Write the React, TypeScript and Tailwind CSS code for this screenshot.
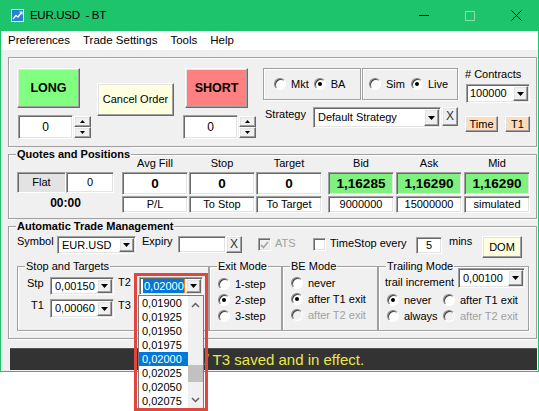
import React from "react";

const sunken =
  "border border-t-[#a0a0a0] border-l-[#a0a0a0] border-r-white border-b-white shadow-[inset_1px_1px_0_#696969,inset_-1px_-1px_0_#e3e3e3]";
const raised =
  "border border-t-white border-l-white border-r-[#696969] border-b-[#696969] shadow-[inset_-1px_-1px_0_#a0a0a0,inset_1px_1px_0_#e3e3e3]";
const etched = "relative border border-[#a0a0a0] shadow-[inset_1px_1px_0_#fff,1px_1px_0_#fff]";

const Tri = ({ up = false, small = false }: { up?: boolean; small?: boolean }) =>
  small ? (
    <svg width="5" height="3" viewBox="0 0 5 3">
      <path d={up ? "M0 3h5L2.5 0z" : "M0 0h5L2.5 3z"} fill="#000" />
    </svg>
  ) : (
    <svg width="7" height="4" viewBox="0 0 7 4">
      <path d={up ? "M0 4h7L3.5 0z" : "M0 0h7L3.5 4z"} fill="#000" />
    </svg>
  );

const Combo = ({ className = "", children }: { className?: string; children?: React.ReactNode }) => (
  <div className={`${sunken} bg-white flex p-[1px] ${className}`}>
    <div className="flex-1 flex items-center pl-[3px] overflow-hidden whitespace-nowrap">{children}</div>
    <div className={`${raised} bg-[#f0f0f0] w-[15px] flex items-center justify-center`}>
      <Tri />
    </div>
  </div>
);

const Btn = ({ className = "", children }: { className?: string; children?: React.ReactNode }) => (
  <div className={`${raised} flex items-center justify-center ${className}`}>{children}</div>
);

const Spinner = ({ className = "" }: { className?: string }) => (
  <div className={`flex gap-[1px] ${className}`}>
    <div className={`${sunken} bg-white w-[55px] h-[24px] flex items-center justify-center text-[12px]`}>0</div>
    <div className="w-[17px] h-[24px] flex flex-col justify-between py-[1px]">
      <div className={`${raised} bg-[#f0f0f0] h-[11px] flex items-center justify-center`}>
        <Tri up small />
      </div>
      <div className={`${raised} bg-[#f0f0f0] h-[11px] flex items-center justify-center`}>
        <Tri small />
      </div>
    </div>
  </div>
);

const Radio = ({ on = false, off = false }: { on?: boolean; off?: boolean }) => (
  <span
    className={`w-[12px] h-[12px] rounded-full border border-t-[#808080] border-l-[#808080] border-r-white border-b-white shadow-[inset_1px_1px_0_#404040] ${
      off ? "bg-[#f0f0f0]" : "bg-white"
    } flex items-center justify-center shrink-0`}
  >
    {on && <span className="w-[4px] h-[4px] rounded-full bg-black" />}
  </span>
);

const RadioItem = ({ label, on = false, off = false, className = "" }: { label: string; on?: boolean; off?: boolean; className?: string }) => (
  <div className={`flex items-center ${className}`}>
    <Radio on={on} off={off} />
    <span className={`ml-[5px] whitespace-nowrap ${off ? "text-[#a0a0a0]" : ""}`}>{label}</span>
  </div>
);

const Check = ({ on = false, off = false, className = "" }: { on?: boolean; off?: boolean; className?: string }) => (
  <span className={`${sunken} w-[13px] h-[13px] ${off ? "bg-[#f0f0f0]" : "bg-white"} flex items-center justify-center shrink-0 ${className}`}>
    {on && (
      <svg width="9" height="8" viewBox="0 0 9 8">
        <path d="M1 4l2.5 2.5L8 1" fill="none" stroke={off ? "#a0a0a0" : "#000"} strokeWidth="1.6" />
      </svg>
    )}
  </span>
);

const GroupLabel = ({ className = "", children }: { className?: string; children: React.ReactNode }) => (
  <span className={`absolute left-[7px] top-[-8px] px-[1px] bg-[#f0f0f0] leading-[14px] whitespace-nowrap ${className}`}>{children}</span>
);

const QCol = ({ head, value, sub, green = false }: { head: string; value: string; sub: string; green?: boolean }) => (
  <div className="w-[66px] flex flex-col">
    <div className="h-[17px] leading-[17px] text-center">{head}</div>
    <div
      className={`${sunken} h-[23px] ${green ? "bg-[#80f080]" : "bg-white"} flex items-center justify-center font-bold text-[13.5px]`}
    >
      {value}
    </div>
    <div className={`${sunken} bg-white h-[17px] mt-[1px] flex items-center justify-center`}>{sub}</div>
  </div>
);

const listItems = ["0,01900", "0,01925", "0,01950", "0,01975", "0,02000", "0,02025", "0,02050", "0,02075"];

export default function App() {
  return (
    <div className="w-[539px] h-[411px] bg-white relative overflow-hidden font-['Liberation_Sans',Arial,sans-serif] text-[11px] leading-[13px] text-black">
      <div className="w-[539px] h-[372px] bg-[#1ec46c] flex flex-col">
        {/* title bar */}
        <div className="h-[31px] flex items-center shrink-0">
          <svg className="ml-[11px]" width="13" height="13" viewBox="0 0 13 13">
            <rect x="0.5" y="0.5" width="12" height="12" fill="#2b7fd4" stroke="#d6e8f8" />
            <path d="M2 10L5 6.5L7 8L10.5 3.5" fill="none" stroke="#fff" strokeWidth="1.3" />
            <path d="M8.5 3h2.5v2.5" fill="none" stroke="#fff" strokeWidth="1.1" />
          </svg>
          <span className="ml-[6px] text-[11.5px] tracking-[-0.3px] whitespace-pre">EUR.USD  - BT</span>
          <div className="ml-auto flex h-full">
            <div className="w-[46px] flex items-center justify-center">
              <span className="w-[10px] h-[1px] bg-black" />
            </div>
            <div className="w-[46px] flex items-center justify-center">
              <span className="w-[10px] h-[10px] border border-[#86dcab]" />
            </div>
            <div className="w-[46px] flex items-center justify-center">
              <svg width="11" height="11" viewBox="0 0 11 11">
                <path d="M0.5 0.5L10.5 10.5M10.5 0.5L0.5 10.5" stroke="#000" strokeWidth="1" />
              </svg>
            </div>
          </div>
        </div>

        <div className="mx-[1px] mb-[1px] flex-1 flex flex-col">
          {/* menu */}
          <div className="h-[19px] bg-white flex items-center gap-[13px] pl-[7px] text-[11.5px] shrink-0">
            <span>Preferences</span>
            <span>Trade Settings</span>
            <span>Tools</span>
            <span>Help</span>
          </div>

          {/* body */}
          <div className="flex-1 bg-[#f0f0f0] flex flex-col">
            {/* order box */}
            <div className={`${etched} ml-[7px] mt-[7px] w-[529px] h-[90px] flex items-start`}>
              <div className="ml-[8px] mt-[10px] flex flex-col">
                <Btn className="w-[63px] h-[40px] bg-[#80ff80] text-[12.5px] font-bold">LONG</Btn>
                <Spinner className="mt-[7px] ml-[1px]" />
              </div>
              <Btn className="ml-[6px] mt-[25px] w-[77px] h-[33px] bg-[#ffffe0]">Cancel Order</Btn>
              <div className="ml-[9px] mt-[10px] flex flex-col">
                <Btn className="ml-[2px] w-[63px] h-[40px] bg-[#ff8080] text-[12.5px] font-bold">SHORT</Btn>
                <Spinner className="mt-[7px]" />
              </div>
              <div className="ml-[7px] mt-[10px] flex flex-col">
                <div className="flex gap-[1px]">
                  <div className={`${etched} w-[98px] h-[32px] flex items-center pl-[10px]`}>
                    <RadioItem label="Mkt" />
                    <RadioItem label="BA" on className="ml-[5px]" />
                  </div>
                  <div className={`${etched} w-[96px] h-[32px] flex items-center pl-[6px]`}>
                    <RadioItem label="Sim" />
                    <RadioItem label="Live" on className="ml-[6px]" />
                  </div>
                </div>
                <div className="mt-[7px] flex items-start">
                  <span className="ml-[2px] w-[48px] pt-[1px]">Strategy</span>
                  <Combo className="w-[128px] h-[21px]">Default Strategy</Combo>
                  <Btn className="ml-[1px] w-[16px] h-[19px] bg-[#f0f0f0] text-[12px] text-[#333]">X</Btn>
                </div>
              </div>
              <div className="ml-[7px] mt-[10px] flex flex-col">
                <span className="whitespace-nowrap">
                  # Contracts
                </span>
                <Combo className="mt-[3px] ml-[1px] w-[64px] h-[19px]">
                  <span className="-ml-[1px]">100000</span>
                </Combo>
                <div className="mt-[13px] flex">
                  <Btn className="w-[33px] h-[16px] bg-[#ffdcb8]">Time</Btn>
                  <Btn className="ml-[7px] w-[25px] h-[16px] bg-[#ffdcb8]">T1</Btn>
                </div>
              </div>
            </div>

            {/* quotes and positions */}
            <div className={`${etched} ml-[7px] mt-[7px] w-[529px] h-[65px] flex items-start`}>
              <GroupLabel className="font-bold">Quotes and Positions</GroupLabel>
              <div className="ml-[8px] mt-[17px] w-[97px] flex flex-col items-center">
                <div className="flex">
                  <div className={`${sunken} bg-[#e3e3e3] w-[49px] h-[21px] flex items-center justify-center`}>Flat</div>
                  <div className={`${sunken} bg-white w-[48px] h-[21px] flex items-center justify-center`}>0</div>
                </div>
                <span className="mt-[3px] font-bold text-[12px] leading-[14px]">00:00</span>
              </div>
              <div className="ml-[8px] flex gap-[1px]">
                <QCol head="Avg Fill" value="0" sub="P/L" />
                <QCol head="Stop" value="0" sub="To Stop" />
                <QCol head="Target" value="0" sub="To Target" />
              </div>
              <div className="ml-[6px] flex gap-[2px]">
                <QCol head="Bid" value="1,16285" sub="9000000" green />
                <QCol head="Ask" value="1,16290" sub="15000000" green />
                <QCol head="Mid" value="1,16290" sub="simulated" green />
              </div>
            </div>

            {/* automatic trade management */}
            <div className={`${etched} ml-[7px] mt-[7px] w-[529px] h-[113px] flex flex-col`}>
              <GroupLabel className="font-bold">Automatic Trade Management</GroupLabel>
              <div className="mt-[8px] ml-[8px] flex items-start">
                <span className="w-[40px]">Symbol</span>
                <Combo className="mt-[1px] w-[79px] h-[18px]">EUR.USD</Combo>
                <span className="ml-[6px] w-[36px]">Expiry</span>
                <div className={`${sunken} bg-white mt-[1px] w-[48px] h-[17px]`} />
                <Btn className="mt-[1px] w-[16px] h-[17px] bg-[#f0f0f0] text-[12px] text-[#333]">X</Btn>
                <Check on off className="ml-[16px] mt-[3px]" />
                <span className="ml-[4px] mt-[2px] w-[38px] text-[#a0a0a0]">ATS</span>
                <Check className="mt-[3px]" />
                <span className="ml-[4px] mt-[2px] w-[86px] whitespace-nowrap">TimeStop every</span>
                <div className={`${sunken} bg-white mt-[2px] w-[26px] h-[17px] flex items-center justify-center`}>5</div>
                <span className="ml-[7px] w-[33px]">mins</span>
                <Btn className="mt-[1px] w-[40px] h-[22px] bg-[#ffffe0]">DOM</Btn>
              </div>

              <div className="mt-[8px] ml-[8px] flex">
                {/* stop and targets */}
                <div className={`${etched} w-[192px] h-[65px] flex flex-col`}>
                  <GroupLabel>Stop and Targets</GroupLabel>
                  <div className="mt-[10px] flex items-start">
                    <span className="ml-[9px] w-[23px]">Stp</span>
                    <Combo className="w-[64px] h-[18px]">0,00150</Combo>
                    <span className="ml-[4px] -mt-[1px] w-[21px]">T2</span>
                    <Combo className="w-[64px] h-[18px]">
                      <span className="-ml-[1px] bg-[#0078d7] text-white leading-[14px] pl-[1px]">0,02000</span>
                      <span className="w-[1px] h-[14px] bg-[#f08020]" />
                    </Combo>
                  </div>
                  <div className="mt-[4px] flex items-start">
                    <span className="ml-[13px] w-[19px]">T1</span>
                    <Combo className="w-[64px] h-[19px]">0,00060</Combo>
                    <span className="ml-[4px] w-[21px]">T3</span>
                    <Combo className="w-[64px] h-[19px]" />
                  </div>
                </div>

                {/* exit mode */}
                <div className={`${etched} w-[73px] h-[65px] flex flex-col pl-[8px] pt-[9px]`}>
                  <GroupLabel>Exit Mode</GroupLabel>
                  <RadioItem label="1-step" className="h-[16px]" />
                  <RadioItem label="2-step" on className="h-[16px]" />
                  <RadioItem label="3-step" className="h-[16px]" />
                </div>

                {/* BE mode */}
                <div className={`${etched} w-[96px] h-[65px] flex flex-col pl-[8px] pt-[8px]`}>
                  <GroupLabel>BE Mode</GroupLabel>
                  <RadioItem label="never" className="h-[16px]" />
                  <RadioItem label="after T1 exit" on className="h-[16px]" />
                  <RadioItem label="after T2 exit" off className="h-[16px]" />
                </div>

                {/* trailing mode */}
                <div className={`${etched} w-[151px] h-[65px] flex flex-col`}>
                  <GroupLabel>Trailing Mode</GroupLabel>
                  <div className="flex items-start">
                    <span className="ml-[6px] mt-[9px] w-[73px] whitespace-nowrap">trail increment</span>
                    <Combo className="mt-[1px] w-[67px] h-[20px]">0,00100</Combo>
                  </div>
                  <div className="mt-[3px] ml-[8px] flex h-[16px]">
                    <RadioItem label="never" on className="w-[56px]" />
                    <RadioItem label="after T1 exit" />
                  </div>
                  <div className="ml-[8px] flex h-[16px]">
                    <RadioItem label="always" className="w-[56px]" />
                    <RadioItem label="after T2 exit" off />
                  </div>
                </div>
              </div>
            </div>

            {/* status bar */}
            <div className="ml-[9px] mt-[9px] w-[527px] h-[22px] bg-[#333333] border-t border-[#555] flex items-center justify-center text-[15px] leading-[18px] text-[#e8e84c] whitespace-pre">
              T2 / T3 saved and in effect.
            </div>
          </div>
        </div>
      </div>

      {/* open dropdown list of T2 */}
      <div className="absolute left-[138px] top-[295px] w-[66px] h-[114px] bg-white border border-[#7a7a7a] flex">
        <div className="w-[49px] flex flex-col">
          {listItems.map((v) => (
            <div
              key={v}
              className={`h-[14px] leading-[14px] pl-[3px] ${v === "0,02000" ? "bg-[#0078d7] text-white" : ""}`}
            >
              {v}
            </div>
          ))}
        </div>
        <div className="w-[15px] bg-[#f0f0f0] flex flex-col items-center">
          <div className="h-[17px] flex items-center justify-center">
            <svg width="9" height="6" viewBox="0 0 9 6">
              <path d="M1 5L4.5 1.5L8 5" fill="none" stroke="#606060" strokeWidth="1.5" />
            </svg>
          </div>
          <div className="mt-[52px] w-[15px] h-[17px] bg-[#c1c1c1]" />
          <div className="mt-auto h-[17px] flex items-center justify-center">
            <svg width="9" height="6" viewBox="0 0 9 6">
              <path d="M1 1L4.5 4.5L8 1" fill="none" stroke="#606060" strokeWidth="1.5" />
            </svg>
          </div>
        </div>
      </div>

      {/* highlight frame */}
      <div className="absolute left-[134px] top-[273px] w-[74px] h-[138px] border-[3px] border-[#e0463e] pointer-events-none" />
    </div>
  );
}
